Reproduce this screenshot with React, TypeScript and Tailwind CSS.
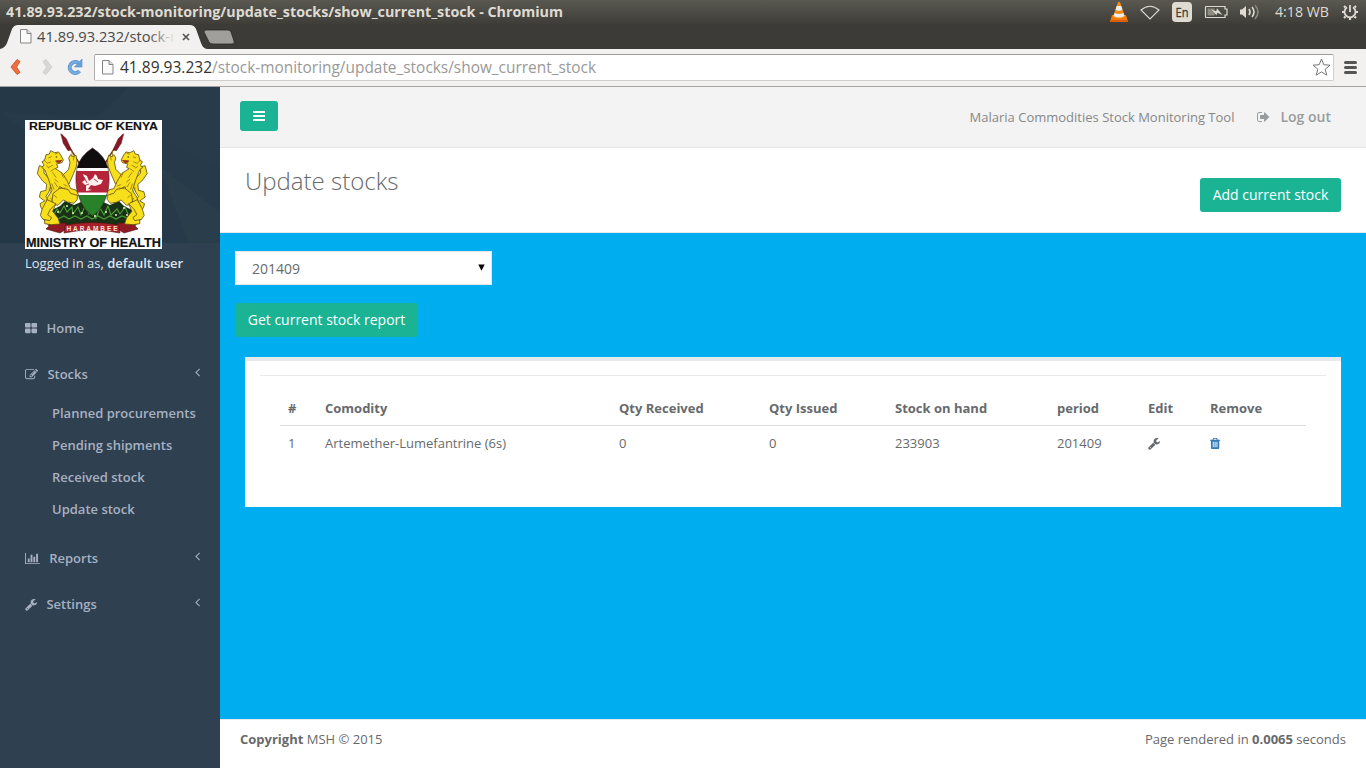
import React from "react";

const PATHS = {
  thLarge:
    "M832 1024v384q0 52-38 90t-90 38h-512q-52 0-90-38t-38-90v-384q0-52 38-90t90-38h512q52 0 90 38t38 90zm0-768v384q0 52-38 90t-90 38h-512q-52 0-90-38t-38-90v-384q0-52 38-90t90-38h512q52 0 90 38t38 90zm896 768v384q0 52-38 90t-90 38h-512q-52 0-90-38t-38-90v-384q0-52 38-90t90-38h512q52 0 90 38t38 90zm0-768v384q0 52-38 90t-90 38h-512q-52 0-90-38t-38-90v-384q0-52 38-90t90-38h512q52 0 90 38t38 90z",
  edit:
    "M888 1184l116-116-152-152-116 116v56h96v96h56zm440-720q-16-16-33 1l-350 350q-17 17-1 33t33-1l350-350q17-17 1-33zm80 594v190q0 119-84.5 203.5t-203.5 84.5h-832q-119 0-203.5-84.5t-84.5-203.5v-832q0-119 84.5-203.5t203.5-84.5h832q63 0 117 25 15 7 18 23 3 17-9 29l-49 49q-14 14-32 8-23-6-45-6h-832q-66 0-113 47t-47 113v832q0 66 47 113t113 47h832q66 0 113-47t47-113v-126q0-13 9-22l64-64q15-15 35-7t20 29zm-96-738l288 288-672 672h-288v-288zm444 132l-92 92-288-288 92-92q28-28 68-28t68 28l152 152q28 28 28 68t-28 68z",
  chart:
    "M640 896v512h-256v-512h256zm384-512v1024h-256v-1024h256zm1024 1152v128h-2048v-1536h128v1408h1920zm-640-896v768h-256v-768h256zm384-384v1152h-256v-1152h256z",
  wrench:
    "M448 1472q0-26-19-45t-45-19-45 19-19 45 19 45 45 19 45-19 19-45zm644-420l-682 682q-37 37-90 37-52 0-91-37l-106-108q-38-36-38-90 0-53 38-91l681-681q39 98 114.5 173.5t173.5 114.5zm634-435q0 39-23 106-47 134-164.5 217.5t-258.5 83.5q-185 0-316.5-131.5t-131.5-316.5 131.5-316.5 316.5-131.5q58 0 121.5 16.5t107.5 46.5q16 11 16 28t-16 28l-293 169v224l193 107q5-3 79-48.5t135.5-81 70.5-35.5q15 0 23.5 10t8.5 25z",
  angleLeft:
    "M627 544q0 13-10 23l-393 393 393 393q10 10 10 23t-10 23l-50 50q-10 10-23 10t-23-10l-466-466q-10-10-10-23t10-23l466-466q10-10 23-10t23 10l50 50q10 10 10 23z",
  signOut:
    "M640 1440q0 4 1 20t.5 26.5-3 23.5-10 19.5-20.5 6.5h-320q-119 0-203.5-84.5t-84.5-203.5v-704q0-119 84.5-203.5t203.5-84.5h320q13 0 22.5 9.5t9.5 22.5q0 4 1 20t.5 26.5-3 23.5-10 19.5-20.5 6.5h-320q-66 0-113 47t-47 113v704q0 66 47 113t113 47h312l11.5 1 11.5 3 8 5.5 7 9 2 13.5zm928-544q0 26-19 45l-544 544q-19 19-45 19t-45-19-19-45v-288h-448q-26 0-45-19t-19-45v-384q0-26 19-45t45-19h448v-288q0-26 19-45t45-19 45 19l544 544q19 19 19 45z",
  trash:
    "M512 1376v-704q0-14-9-23t-23-9h-64q-14 0-23 9t-9 23v704q0 14 9 23t23 9h64q14 0 23-9t9-23zm256 0v-704q0-14-9-23t-23-9h-64q-14 0-23 9t-9 23v704q0 14 9 23t23 9h64q14 0 23-9t9-23zm256 0v-704q0-14-9-23t-23-9h-64q-14 0-23 9t-9 23v704q0 14 9 23t23 9h64q14 0 23-9t9-23zm-544-992h448l-48-117q-7-9-17-11h-317q-10 2-17 11zm928 32v64q0 14-9 23t-23 9h-96v948q0 83-47 143.5t-113 60.5h-832q-66 0-113-58.5t-47-141.5v-952h-96q-14 0-23-9t-9-23v-64q0-14 9-23t23-9h309l70-167q15-37 54-63t79-26h320q40 0 79 26t54 63l70 167h309q14 0 23 9t9 23z",
};

type GlyphProps = { name: keyof typeof PATHS; units: number; left?: number; size?: number; className?: string };

function Glyph({ name, units, left = 0, size = 13, className = "" }: GlyphProps) {
  return (
    <svg viewBox={`${left} 0 ${units} 1792`} width={(units / 1792) * size} height={size} fill="currentColor" className={`shrink-0 overflow-visible ${className}`}>
      <path d={PATHS[name]} />
    </svg>
  );
}

function PageIcon({ className = "" }: { className?: string }) {
  return (
    <svg width="12" height="15" viewBox="0 0 12 15" className={`shrink-0 ${className}`}>
      <path d="M.5.5h6.500l4 4v9.500H.5z" fill="#fafafa" stroke="#858585" />
      <path d="M7 .5v4h4" fill="#ddd" stroke="#858585" />
    </svg>
  );
}

function TitleBar() {
  return (
    <div className="flex h-6 shrink-0 items-center bg-gradient-to-b from-[#5a5851] to-[#3e3d38] pl-1.5 text-[#dfdbd2]">
      <svg width="557" height="24" className="block text-[13.4px] font-bold">
        <text x="0" y="17" textLength="557" lengthAdjust="spacingAndGlyphs" fill="currentColor">
          41.89.93.232/stock-monitoring/update_stocks/show_current_stock - Chromium
        </text>
      </svg>
      <svg width="20" height="22" viewBox="0 0 20 22" className="-mt-0.5 ml-auto">
        <path d="M3 15h14l2 7H1z" fill="#f57900" />
        <path d="M9 2h2l5 15q-6 4-12 0z" fill="#f58a12" />
        <path d="M7.700 6h4.600l1.200 4q-3.500 1.600-7 0zM5.500 13q4.500 2 9 0l1 3q-5.500 3-11 0z" fill="#eee" />
        <path d="M1 20h18v2H1z" fill="#d95f00" />
      </svg>
      <svg width="20" height="15" viewBox="0 0 20 15" className="ml-[11px]" fill="none" stroke="#dfdbd2" strokeWidth="1.100">
        <path d="M1 5Q10-2.500 19 5L10 14z" />
      </svg>
      <span className="ml-3 flex h-5 w-5 rounded-sm bg-[#dfdbd2]">
        <svg width="20" height="20">
          <text x="3.500" y="14.500" fontSize="12.500" textLength="13" lengthAdjust="spacingAndGlyphs" fill="#3c3b37" stroke="#3c3b37" strokeWidth=".3">En</text>
        </svg>
      </span>
      <svg width="25" height="14" viewBox="0 0 25 14" className="ml-3">
        <path d="M2.500 1.500h18.500v2.500h2v6h-2v2.500h-18.500q-1 0-1-1v-9q0-1 1-1z" fill="none" stroke="#dfdbd2" strokeWidth="1.200" />
        <path d="M3.500 3.500h7v7h-7z" fill="#8f8c84" />
        <path d="M6 3.500l6 2.500 1-3 6 7.500-5.500-2.500-1 2.500z" fill="#dfdbd2" stroke="#4a4943" strokeWidth=".4" />
      </svg>
      <svg width="21" height="18" viewBox="0 0 21 18" className="ml-[10px]" fill="none" strokeWidth="1.600">
        <path d="M1 6.500h2l4-3.500v12l-4-3.500H1z" fill="#dfdbd2" />
        <path d="M10 6q2 3 0 6M13 4q4 5 0 10" stroke="#dfdbd2" />
        <path d="M16 2q6 7 0 14" stroke="#89867e" />
      </svg>
      <svg width="55" height="24" className="ml-[15px]">
        <text x="0" y="17" fontSize="14" textLength="54" lengthAdjust="spacingAndGlyphs" fill="#dfdbd2">4:18 WB</text>
      </svg>
      <svg width="18" height="18" viewBox="0 0 18 18" className="ml-[11px] mr-[7px]" fill="none" stroke="#dfdbd2">
        <path d="M6 4.200a5.500 5.500 0 1 0 6 0" strokeWidth="1.800" />
        <path d="M9 2v7" strokeWidth="1.800" />
        <path d="M1 9h2M15 9h2M3 3l1.500 1.500M15 3l-1.500 1.500M3 15l1.500-1.500M15 15l-1.500-1.500M9 15v2" strokeWidth="2.200" />
      </svg>
    </div>
  );
}

function TabStrip() {
  return (
    <div className="relative h-[25px] shrink-0 bg-[#3c3b37]">
      <svg width="240" height="25" viewBox="0 0 240 25" className="absolute inset-0">
        <path d="M0 25Q5 24 7 19L12 5Q14 1 18 1H190Q194 1 196 5L201 19Q203 25 208 25z" fill="#f2f1f0" />
        <path d="M206 6h22q2 0 3 2l3 9q1 3-3 3h-18q-3 0-4-2l-5-10q0-2 2-2z" fill="#a09f9c" stroke="#2c2b28" strokeWidth=".8" />
        <path d="M183 10l6 6m0-6l-6 6" stroke="#555" strokeWidth="1.700" />
      </svg>
      <div className="relative flex h-full items-center pl-5">
        <PageIcon />
        <svg width="140" height="24" className="ml-[5px] overflow-visible">
          <defs>
            <linearGradient id="fade" gradientUnits="userSpaceOnUse" x1="112" x2="138" y1="0" y2="0">
              <stop stopColor="#4a4a4a" />
              <stop offset="1" stopColor="#f2f1f0" />
            </linearGradient>
          </defs>
          <text x="0" y="17" fontSize="14" textLength="139" lengthAdjust="spacingAndGlyphs" fill="url(#fade)">41.89.93.232/stock-r</text>
        </svg>
      </div>
    </div>
  );
}

function Toolbar() {
  return (
    <div className="flex h-[38px] shrink-0 items-center border-b border-[#a5a4a2] bg-[#f2f1f0] pl-2.5 pr-2">
      <svg width="12" height="18" viewBox="0 0 12 18" className="-mt-0.5">
        <path d="M1 9L7 1.500l3 2L6.500 9l3.500 5.500-3 2z" fill="#ee7041" stroke="#c9481b" strokeWidth=".8" />
      </svg>
      <svg width="12" height="18" viewBox="0 0 12 18" className="-mt-0.5 ml-[19px]">
        <path d="M11 9L5 1.500l-3 2L5.500 9 2 14.500l3 2z" fill="#d8d7d5" stroke="#c3c2c0" strokeWidth=".6" />
      </svg>
      <svg width="18" height="18" viewBox="0 0 18 18" className="-mt-0.5 ml-[13px]" fill="none">
        <path d="M12.500 5A5.500 5.500 0 1 0 13.500 13" stroke="#5b93cf" strokeWidth="4" />
        <path d="M12.500 5A5.500 5.500 0 1 0 13.500 13" stroke="#79abdf" strokeWidth="2.400" />
        <path d="M16 1v8H8.500z" fill="#6ca2da" stroke="#5b93cf" strokeWidth=".7" />
      </svg>
      <div className="ml-[10px] flex h-[27px] flex-1 items-center rounded-[2px] border border-[#cfcecc] border-t-[#9c9b99] border-l-[#b0afad] bg-white pl-[7px] pr-[3px]">
        <PageIcon />
        <svg width="480" height="25" className="ml-[6px] overflow-visible">
          <text x="0" y="18" fontSize="16" textLength="92" lengthAdjust="spacingAndGlyphs" fill="#333">41.89.93.232</text>
          <text x="92" y="18" fontSize="16" textLength="384" lengthAdjust="spacingAndGlyphs" fill="#999">/stock-monitoring/update_stocks/show_current_stock</text>
        </svg>
        <svg width="19" height="19" viewBox="0 0 19 19" className="-mr-px ml-auto">
          <path d="M9.500 1l2.300 5.700 6.200.5-4.800 4 1.600 6-5.300-3.300-5.300 3.300 1.600-6-4.800-4 6.200-.5z" fill="#fff" stroke="#777" strokeLinejoin="round" />
        </svg>
      </div>
      <div className="ml-[10px] mr-px flex w-[13px] flex-col gap-0.5">
        <i className="h-[3px] rounded-full bg-[#555]" />
        <i className="h-[3px] rounded-full bg-[#555]" />
        <i className="h-[3px] rounded-full bg-[#555]" />
      </div>
    </div>
  );
}

function Supporter() {
  return (
    <g transform="translate(-25 -34) scale(.33333)" strokeLinejoin="round" strokeLinecap="round">
      <path d="M186 147L240 235" stroke="#6d2020" strokeWidth="4" />
      <path d="M183 144l16 14 15 34-10 2-14-22z" fill="#8a1726" stroke="#4a1016" strokeWidth="1.500" />
      <g fill="#f8df1c" stroke="#5a4a08" strokeWidth="2.400">
        <path d="M150 385q-28-8-30-32l14-8-16-12 4-16 16-4 2-18-12-10-16-22 6-24 14 4 0 18 14 16 8 22-8 20-8 12 10 16 4 16z" />
        <path d="M188 268l18-18 4-20-4-14 6-10 6 6 10-4 3 16-2 18-8 20-14 32-18 0z" />
        <path d="M134 222l4-16 10-2 4-10 12 6 12-2 8 12 6 12-4 8-16 4 4 10-8 4 22 14 14 24 10 22 16 4 8 14-10 8-18-4-20-24-10-4-4 20-2 22-8 18-6 14 16 20 6 18-26 2-20-3 0-11 8-5-8-26 8-36 14-22-10-32-12-30-8-6 6-8-6-10 8-4z" />
        <path d="M160 322l20-16 24 4 8 12 20 6 0 12-10 12-20-4-12-6-16 16-18-4z" />
        <path d="M141 342l-14 26-6 20 8 12 20 4 6-9-12-9 8-16 16-16z" />
      </g>
      <g stroke="#957209" strokeWidth="2.400">
        <path d="M146 216l8-4m-12 20l10-4m-6 16l12-6m-6 18l12-8m2-44l6-2m-14 58l10 14m-4 6l10 8m10-28l6 14m-26 16l8 12m-16-8l6 16m-14-4l6 12m38-22l10 4m-20 8l14-2m-34 22l8 6m-18 2l6 10m-26-124l8 8m0 10l6 6m70-52l0 18m8-8l-4 18" />
      </g>
      <path d="M168 224l18-1-8 8-8-2z" fill="#c12b20" stroke="#5e1610" strokeWidth="1.500" />
      <circle cx="169" cy="213" r="2" fill="#3b2b05" />
    </g>
  );
}

function CoatOfArms() {
  return (
    <svg width="137" height="129" viewBox="0 0 137 129" fill="none" className="block shrink-0" fontFamily='"Liberation Sans", sans-serif'>
      <path d="M0 0h137v129H0z" fill="#fff" />
      <text x="4" y="10" fontSize="11.200" textLength="129" lengthAdjust="spacingAndGlyphs" fill="#111" stroke="#111" strokeWidth=".15">REPUBLIC OF KENYA</text>
      <path d="M24 101l3-11 8-4 5-5 9 4 7-3 11 3 11-3 7 3 9-4 5 5 8 4 3 11-10 5-33-2-33 2z" fill="#183216" />
      <path d="M29 94l3-5 3 4 4-7 3 6 5-5 1 7 5-7 3 8 5-11 3 10 4-4 3 8 4-10 4 7 4-9 3 9 6-6 3 5 5-7 3 7M33 99l6-3 5 3 6-3 6 3 6-3 5 3 6-3 6 3 6-3 6 3 6-3 5 2" stroke="#4c9a38" strokeWidth="1.200" />
      <path d="M32 92h2m7-6h2m4 7h2m7 0h2m11 3h2m9-4h2m8 3h2m6-7h2m1 7h2" stroke="#e7edc3" strokeWidth="1.300" />
      <path d="M19 99q10 5 22 4l2 5-8 5-14-4 3-3zM115 99q-10 5-22 4l-2 5 8 5 14-4-3-3z" fill="#911b23" stroke="#4d1114" strokeWidth=".6" />
      <Supporter />
      <g transform="translate(134.500 0) scale(-1 1)"><Supporter /></g>
      <clipPath id="shield"><path d="M67.500 28Q55 36 52 48q-3 16 2 29Q58 90 67.500 96q9.500-6 13.500-19 5-13 2-29-3-12-15.500-20z" /></clipPath>
      <g clipPath="url(#shield)">
        <path d="M45 25h44v24H45z" fill="#100d0e" />
        <path d="M45 48h44v28H45z" fill="#fff" />
        <path d="M45 51h44v21.500H45z" fill="#b52439" />
        <path d="M45 75h44v22H45z" fill="#278229" />
      </g>
      <path d="M67.500 28Q55 36 52 48q-3 16 2 29Q58 90 67.500 96q9.500-6 13.500-19 5-13 2-29-3-12-15.500-20z" stroke="#3a1717" strokeWidth=".6" />
      <path d="M58 54l4 2 2 5 4-3 2-4 2 2 1 3 5 1-2 4-6 2-4-1-3 4 4 1-6 1 0-5-4-4 3-2z" fill="#fff0ee" />
      <path d="M59 66l5-2m-5-7l3 6m7-4l4 3" stroke="#8d1930" strokeWidth=".8" />
      <path d="M40 105q27-5 54 0l1 8q-28-6-56 0z" fill="#a8212a" stroke="#4d1114" strokeWidth=".6" />
      <text x="41.500" y="111" fontSize="6.500" fontWeight="bold" textLength="51" lengthAdjust="spacing" fill="#f8e3d6">HARAMBEE</text>
      <text x="1" y="127" fontSize="12.200" textLength="135" lengthAdjust="spacingAndGlyphs" fill="#111" stroke="#111" strokeWidth=".2">MINISTRY OF HEALTH</text>
    </svg>
  );
}

type NavProps = { icon: keyof typeof PATHS; units: number; left?: number; label: string; arrow?: boolean };

function NavItem({ icon, units, left, label, arrow }: NavProps) {
  return (
    <a className="flex h-[46px] items-center pl-[25px] pr-5">
      <Glyph name={icon} units={units} left={left} />
      <span className="ml-[9.4px] pt-0.5">{label}</span>
      {arrow && <Glyph name="angleLeft" units={653} size={14} className="mb-[5px] ml-auto" />}
    </a>
  );
}

function Sidebar() {
  return (
    <aside className="w-[220px] shrink-0 bg-[#2f4050] text-[13px] font-semibold text-[#a7b1c2]">
      <div className="relative h-[218px]">
        <svg width="220" height="156" viewBox="0 0 220 156" className="absolute inset-0">
          <path d="M0 0h220v156H0z" fill="#263a49" />
          <path d="M0 0h128L95 30 0 25z" fill="#253848" />
          <path d="M128 0h92v80l-40-20-80-30z" fill="#283b4a" />
          <path d="M160 80l60 45v31h-32z" fill="#293d4b" />
          <path d="M0 25l25 20v111H0z" fill="#253847" />
        </svg>
        <div className="relative px-[25px] pt-[33px]">
          <CoatOfArms />
          <p className="mt-[5px] whitespace-nowrap font-normal leading-[18px] text-[#dfe4ed]">
            Logged in as, <b className="font-semibold">default user</b>
          </p>
        </div>
      </div>
      <nav>
        <NavItem icon="thLarge" units={1664} left={64} label="Home" />
        <NavItem icon="edit" units={1792} label="Stocks" arrow />
        <ul className="pb-2.5 pl-[52px] leading-8">
          <li>Planned procurements</li>
          <li>Pending shipments</li>
          <li>Received stock</li>
          <li>Update stock</li>
        </ul>
        <NavItem icon="chart" units={2048} label="Reports" arrow />
        <NavItem icon="wrench" units={1664} left={64} label="Settings" arrow />
      </nav>
    </aside>
  );
}

const HEADERS = ["#", "Comodity", "Qty Received", "Qty Issued", "Stock on hand", "period", "Edit", "Remove"];
const ROW = ["1", "Artemether-Lumefantrine (6s)", "0", "0", "233903", "201409"];
const GRID = "grid grid-cols-[37px_294px_150px_126px_162px_91px_62px_104px] [&>*]:px-2";

function StockTable() {
  return (
    <div className="mx-5 mt-[15px] leading-[18px]">
      <div className={`${GRID} border-b border-[#ddd] pb-2 pt-2 font-bold`}>
        {HEADERS.map((h) => <span key={h}>{h}</span>)}
      </div>
      <div className={`${GRID} py-2`}>
        {ROW.map((c, i) => <span key={i}>{c}</span>)}
        <span className="flex items-center"><Glyph name="wrench" units={1664} left={64} /></span>
        <span className="flex items-center text-[#337ab7]"><Glyph name="trash" units={1408} /></span>
      </div>
    </div>
  );
}

export default function App() {
  return (
    <div className="flex h-[768px] w-[1366px] flex-col overflow-hidden font-['Open_Sans',sans-serif]">
      <TitleBar />
      <TabStrip />
      <Toolbar />
      <div className="flex min-h-0 flex-1">
        <Sidebar />
        <main className="flex flex-1 flex-col text-[13px] text-[#676a6c]">
          <header className="flex h-[61px] items-center border-b border-[#e7e7e7] bg-[#f3f3f3] pl-5 pr-[35px]">
            <button className="-mt-0.5 flex h-[30px] w-[38px] flex-col items-center justify-center gap-0.5 rounded-[3px] bg-[#1ab394]">
              <i className="h-0.5 w-3 bg-white" />
              <i className="h-0.5 w-3 bg-white" />
              <i className="h-0.5 w-3 bg-white" />
            </button>
            <span className="ml-auto pt-0.5 text-[#888888]">Malaria Commodities Stock Monitoring Tool</span>
            <a className="ml-[23px] flex items-center text-sm font-semibold text-[#999c9e]">
              <Glyph name="signOut" units={1664} size={14} className="mb-px" />
              <span className="ml-2.5">Log out</span>
            </a>
          </header>
          <section className="flex h-[85px] justify-between border-b border-[#e7eaec] bg-white px-[25px]">
            <h2 className="mt-[17px] text-2xl font-light leading-8">Update stocks</h2>
            <button className="mt-[30px] h-[34px] w-[141px] rounded-[3px] bg-[#1ab394] text-sm text-white">Add current stock</button>
          </section>
          <section className="flex flex-1 flex-col items-start bg-[#00aeef] px-[15px] pt-[18px] text-sm">
            <div className="flex h-[34px] w-[257px] items-center justify-between border border-[#e5e6e7] bg-white pl-4 pr-1.5">
              <span className="mt-0.5">201409</span>
              <svg width="7" height="7" viewBox="0 0 7 7" className="mb-0.5"><path d="M.300 .500h6.400L3.500 6.700z" fill="#000" /></svg>
            </div>
            <button className="mt-[18px] h-[34px] w-[183px] rounded-[3px] bg-[#1ab394] text-white">Get current stock report</button>
            <div className="ml-2.5 mt-5 h-[150px] w-[1096px] border-t-4 border-[#e7eaec] bg-white px-[15px] pt-3.5 text-[13px]">
              <hr className="border-[#e7eaec]" />
              <StockTable />
            </div>
          </section>
          <footer className="flex h-[49px] items-start justify-between border-t border-[#e7eaec] bg-white px-5 pt-2.5 leading-[18px]">
            <p><b>Copyright</b> MSH © 2015</p>
            <p>Page rendered in <b>0.0065</b> seconds</p>
          </footer>
        </main>
      </div>
    </div>
  );
}
